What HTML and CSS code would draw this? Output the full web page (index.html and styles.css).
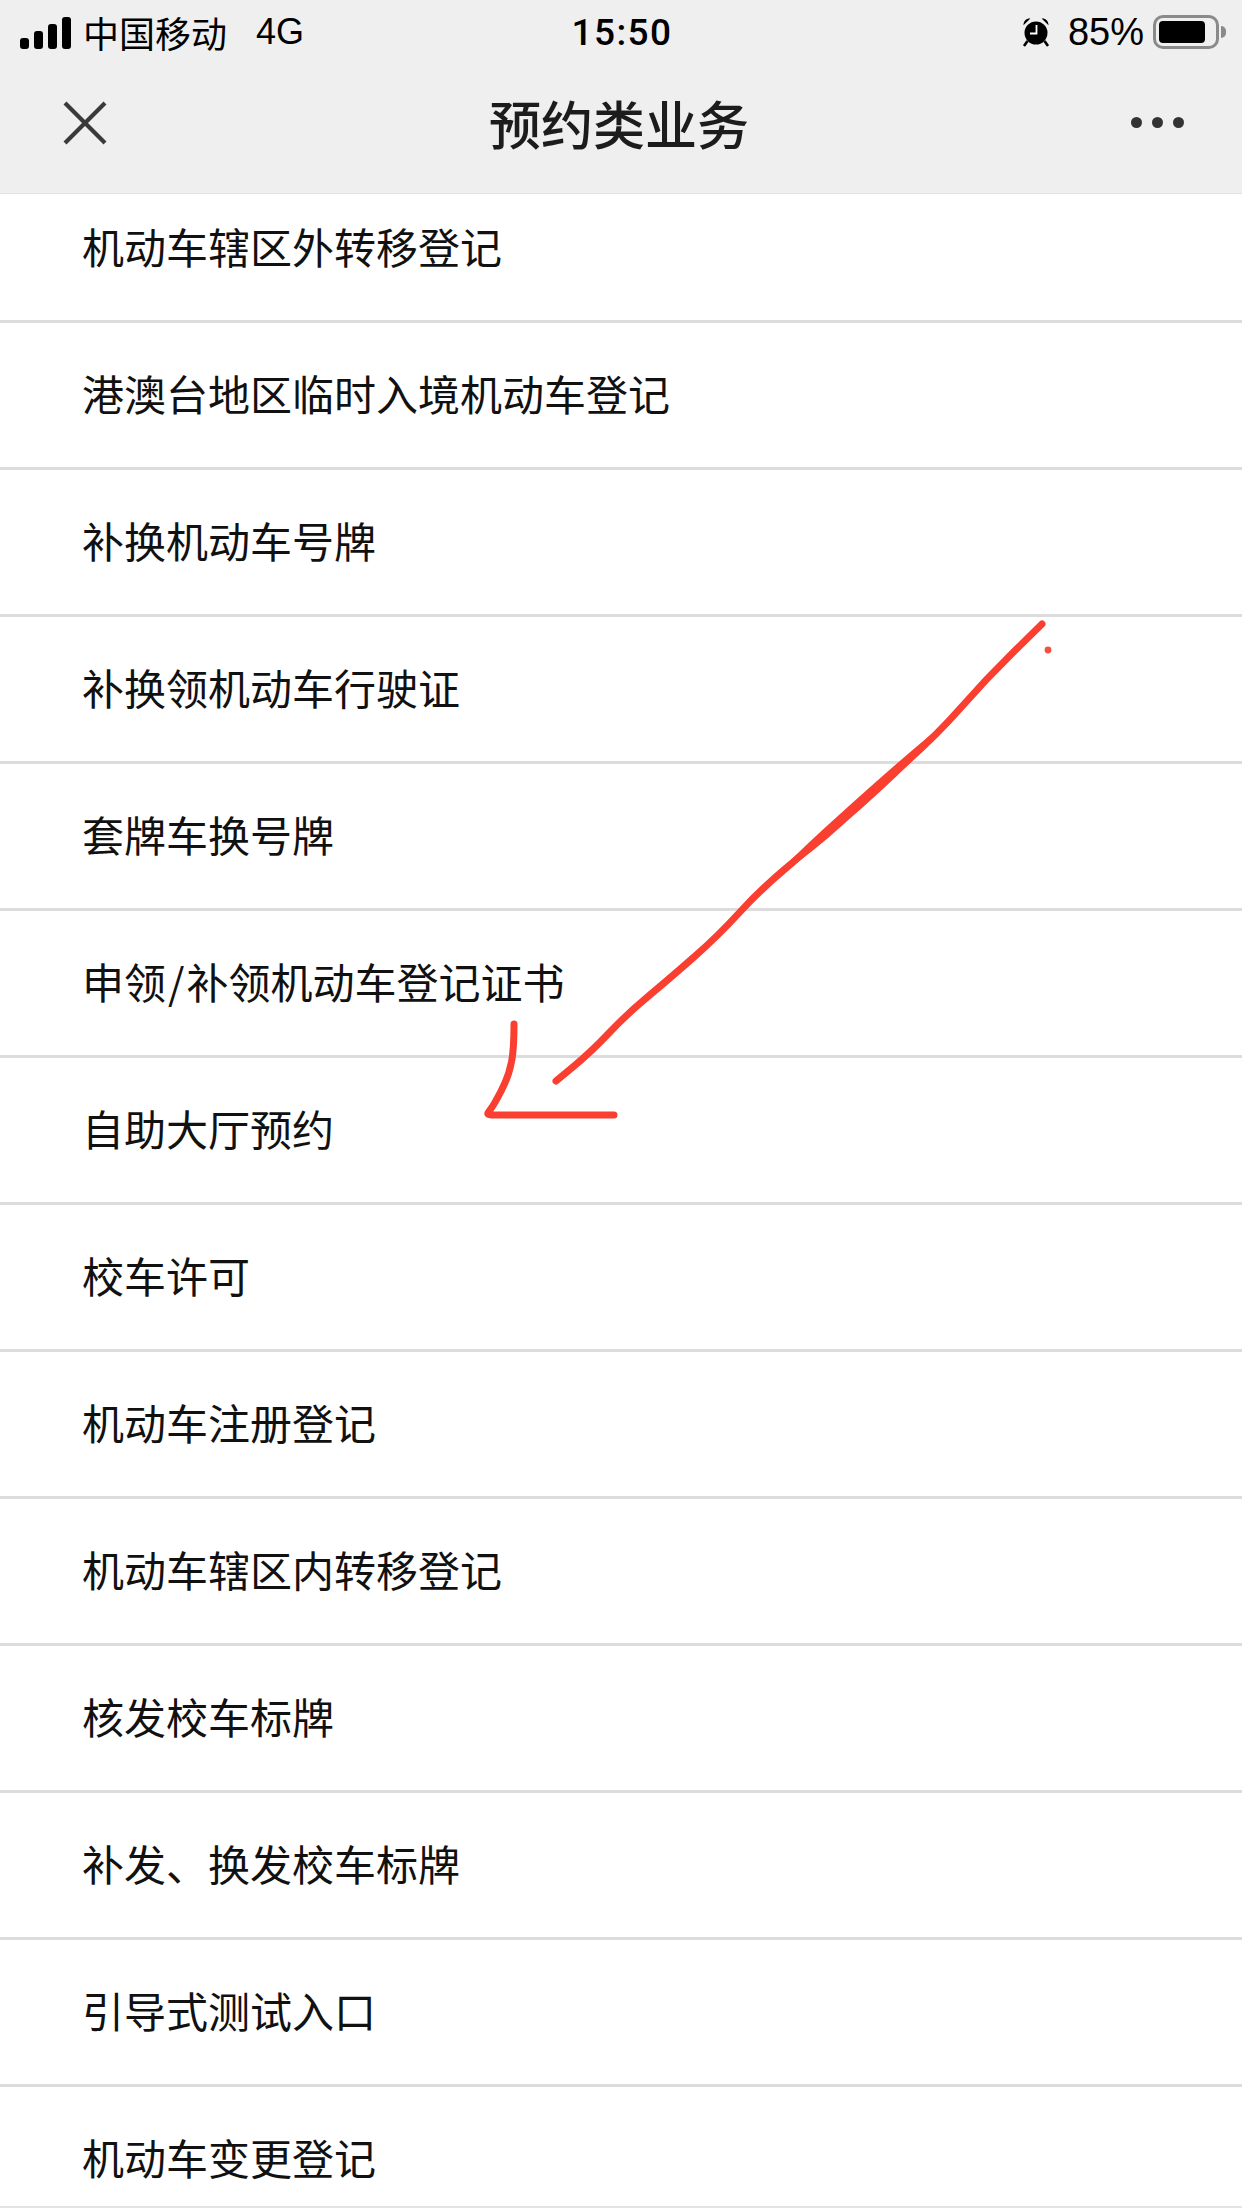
FILE: index.html
```html
<!DOCTYPE html>
<html lang="zh-CN">
<head>
<meta charset="utf-8">
<title>预约类业务</title>
<link rel="stylesheet" href="styles.css">
</head>
<body>
<div class="app">
  <header class="top">
    <div class="status">
      <div class="status-left">
        <div class="signal"><i class="b1"></i><i class="b2"></i><i class="b3"></i><i class="b4"></i></div>
        <span class="carrier">中国移动</span>
        <span class="net">4G</span>
      </div>
      <div class="time">15:50</div>
      <div class="status-right">
        <svg class="alarm" viewBox="0 0 28 30" width="28" height="30">
          <circle cx="14" cy="16" r="11.5" fill="#000"/>
          <path d="M1.5 8.2 C1.5 4 4.5 1.2 8.4 1.6 Z M26.5 8.2 C26.5 4 23.5 1.2 19.6 1.6 Z" fill="#000"/>
          <path d="M5.5 24 L2 29 M22.5 24 L26 29" stroke="#000" stroke-width="2.6" fill="none"/>
          <path d="M14.5 8 V16.5 H8" stroke="#fff" stroke-width="1.8" fill="none"/>
        </svg>
        <span class="pct">85%</span>
        <div class="battery"><div class="level"></div></div>
        <div class="nub"></div>
      </div>
    </div>
    <nav class="nav">
      <svg class="close" viewBox="0 0 44 44" width="44" height="44">
        <path d="M2 2 L42 42 M42 2 L2 42" stroke="#3a3a3a" stroke-width="4.2" fill="none"/>
      </svg>
      <h1 class="title">预约类业务</h1>
      <div class="more"><i></i><i></i><i></i></div>
    </nav>
  </header>
  <main class="scroller">
    <ul class="list">
      <li class="row">机动车辖区外转移登记</li>
      <li class="row">港澳台地区临时入境机动车登记</li>
      <li class="row">补换机动车号牌</li>
      <li class="row">补换领机动车行驶证</li>
      <li class="row">套牌车换号牌</li>
      <li class="row"><span>申领<span class="slash">/</span>补领机动车登记证书</span></li>
      <li class="row">自助大厅预约</li>
      <li class="row">校车许可</li>
      <li class="row">机动车注册登记</li>
      <li class="row">机动车辖区内转移登记</li>
      <li class="row">核发校车标牌</li>
      <li class="row">补发、换发校车标牌</li>
      <li class="row">引导式测试入口</li>
      <li class="row">机动车变更登记</li>
    </ul>
  </main>
  <div class="edge"></div>
  <svg class="scribble" viewBox="0 0 1242 2208" width="1242" height="2208">
    <path class="ink" d="M1042 624 L1014 651.5 Q986 679 961 707.5 Q936 736 904.5 763.5 Q873 791 841.5 819.5 Q810 848 785 869 Q760 890 739 913 Q718 936 693.5 957.5 Q669 979 648 996.5 Q627 1014 609 1033 Q591 1052 573.5 1066.5 L556 1081"/>
    <path class="fill" d="M950 720 Q901 760 838.8 816.5 Q808 844 775 877 Q812 852 844 822.5 Q908 767 950 720 Z"/>
    <path class="ink" d="M514 1024 C514 1040 514 1052 511 1064 C508 1080 500 1094 494 1104 C490 1111 487 1113 488 1114 C489 1115 491 1115 494 1115 L614 1115"/>
    <circle class="dot" cx="1048" cy="650" r="3.4"/>
  </svg>
</div>
</body>
</html>
```
FILE: styles.css
```css
* { box-sizing: border-box; }
html, body { margin: 0; padding: 0; background: #fff; }
.app {
  position: relative;
  width: 1242px;
  height: 2208px;
  overflow: hidden;
  display: flex;
  flex-direction: column;
  font-family: "Liberation Sans", "Noto Sans CJK SC", sans-serif;
  color: #111;
}
.top {
  flex: none;
  height: 194px;
  background: #efeff0;
  border-bottom: 1px solid #e2e2e2;
}
.status {
  height: 62px;
  display: grid;
  grid-template-columns: 1fr auto 1fr;
  align-items: center;
  padding: 0 16px 0 20px;
  color: #000;
}
.status-left { display: flex; align-items: center; }
.signal { display: flex; align-items: flex-end; gap: 5px; height: 32px; margin-top: 2px; }
.signal i { display: block; width: 9px; background: #000; border-radius: 3px; }
.signal .b1 { height: 11px; }
.signal .b2 { height: 18px; }
.signal .b3 { height: 25px; }
.signal .b4 { height: 32px; }
.carrier { font-size: 36px; margin-left: 12px; font-family: "Noto Sans CJK SC", sans-serif; line-height: 62px; }
.net { font-size: 36px; margin-left: 29px; line-height: 62px; }
.time { font-family: Roboto, "Liberation Sans", sans-serif; font-weight: 500; font-size: 37px; letter-spacing: 1.4px; line-height: 62px; margin: 2px 2px 0 0; }
.status-right { display: flex; align-items: center; justify-content: flex-end; }
.alarm { display: block; }
.pct { font-size: 38px; margin-left: 18px; font-family: "Liberation Sans", sans-serif; line-height: 62px; }
.battery {
  width: 66px;
  height: 34px;
  margin-left: 9px;
  border: 3px solid #8a8a8a;
  border-radius: 10px;
  padding: 3px;
  display: flex;
}
.level { width: 46px; background: #000; border-radius: 4px; }
.nub { width: 5px; height: 12px; margin-left: 2px; background: #8a8a8a; border-radius: 0 5px 5px 0; }
.nav {
  height: 131px;
  display: grid;
  grid-template-columns: 1fr auto 1fr;
  align-items: center;
  padding: 0 58px 10px 54px;
}
.close { display: block; margin-left: 9px; }
.title { margin: 0; font-size: 52px; font-weight: 500; color: #1c1c1c; font-family: "Noto Sans CJK SC", sans-serif; line-height: 70px; }
.more { display: flex; justify-content: flex-end; gap: 10px; }
.more i { display: block; width: 11px; height: 11px; border-radius: 50%; background: #333; }
.scroller { flex: 1; min-height: 0; overflow: hidden; background: #fff; }
.list { list-style: none; margin: -18px 0 0; padding: 0; }
.row {
  height: 147px;
  padding: 0 0 6px 82px;
  display: flex;
  align-items: center;
  font-size: 42px;
  color: #111;
  font-family: "Noto Sans CJK SC", sans-serif;
  border-bottom: 3px solid #dcdcdc;
}
.slash { padding: 0 2px; }
.edge { flex: none; height: 2px; background: #e4e4e4; }
.scribble { position: absolute; left: 0; top: 0; pointer-events: none; }
.ink { fill: none; stroke: #fa3e30; stroke-width: 7; stroke-linecap: round; stroke-linejoin: round; }
.fill { fill: #fa3e30; stroke: #fa3e30; stroke-width: 2; }
.dot { fill: #f4503f; }
```
